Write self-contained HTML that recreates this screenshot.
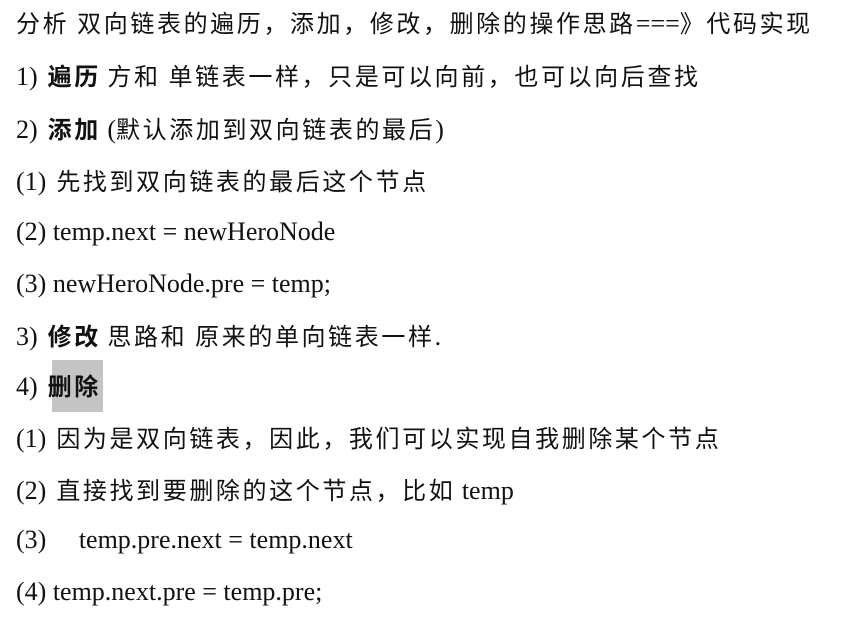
<!DOCTYPE html>
<html><head><meta charset="utf-8"><style>
html,body{margin:0;padding:0;background:#fff;width:856px;height:622px;overflow:hidden}
.l{position:absolute;left:16px;white-space:pre;font-family:"Liberation Serif","Noto Sans CJK SC",serif;font-size:26px;color:#111;line-height:30px;letter-spacing:0px}
.c{font-family:"Noto Sans CJK SC",sans-serif;font-size:24px;letter-spacing:2.6px}
.s{display:inline-block;width:10px}
b{font-weight:bold}
.hl{position:absolute;left:52px;top:360px;width:51px;height:52px;background:#c4c4c4}
</style></head><body>
<div class="hl"></div>
<div class="l" style="top:7px"><span class="c">分析 双向链表的遍历，添加，修改，删除的操作思路</span>===<span class="c">》代码实现</span></div>
<div class="l" style="top:60px">1)<span class="s"></span><b class="c">遍历</b> <span class="c">方和 单链表一样，只是可以向前，也可以向后查找</span></div>
<div class="l" style="top:113px">2)<span class="s"></span><b class="c">添加</b> (<span class="c">默认添加到双向链表的最后</span>)</div>
<div class="l" style="top:165px">(1)<span class="s"></span><span class="c">先找到双向链表的最后这个节点</span></div>
<div class="l" style="top:217px">(2) temp.next = newHeroNode</div>
<div class="l" style="top:269px">(3) newHeroNode.pre = temp;</div>
<div class="l" style="top:320px">3)<span class="s"></span><b class="c">修改</b> <span class="c">思路和 原来的单向链表一样</span>.</div>
<div class="l" style="top:370px">4)<span class="s"></span><b class="c">删除</b></div>
<div class="l" style="top:422px">(1)<span class="s"></span><span class="c">因为是双向链表，因此，我们可以实现自我删除某个节点</span></div>
<div class="l" style="top:474px">(2)<span class="s"></span><span class="c">直接找到要删除的这个节点，比如</span> temp</div>
<div class="l" style="top:525px">(3)     temp.pre.next = temp.next</div>
<div class="l" style="top:577px">(4) temp.next.pre = temp.pre;</div>
</body></html>
